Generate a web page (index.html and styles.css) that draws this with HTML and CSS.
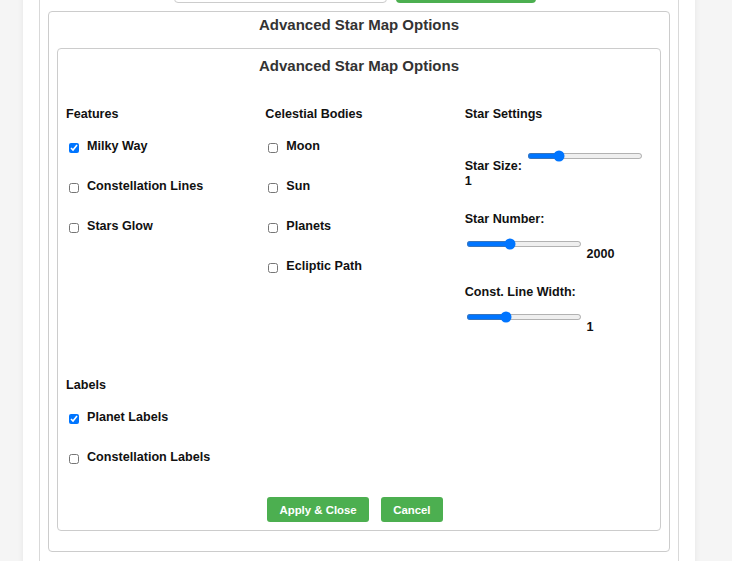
FILE: index.html
```html
<!DOCTYPE html>
<html lang="en">
<head>
<meta charset="utf-8">
<title>Advanced Star Map Options</title>
<link rel="stylesheet" href="styles.css">
</head>
<body>
<div class="page">
  <div class="container">
    <div class="toolbar">
      <input class="search" type="text" aria-label="Location">
      <button class="save-btn" type="button" aria-label="Generate"></button>
    </div>
    <section class="options-card">
      <h3 class="card-title">Advanced Star Map Options</h3>
      <div class="options-dialog">
        <h3 class="card-title dialog-title">Advanced Star Map Options</h3>
        <div class="options-grid">
          <div class="group">
            <h4 class="group-title">Features</h4>
            <label class="option"><input type="checkbox" checked><span>Milky Way</span></label>
            <label class="option"><input type="checkbox"><span>Constellation Lines</span></label>
            <label class="option"><input type="checkbox"><span>Stars Glow</span></label>
          </div>
          <div class="group">
            <h4 class="group-title">Celestial Bodies</h4>
            <label class="option"><input type="checkbox"><span>Moon</span></label>
            <label class="option"><input type="checkbox"><span>Sun</span></label>
            <label class="option"><input type="checkbox"><span>Planets</span></label>
            <label class="option"><input type="checkbox"><span>Ecliptic Path</span></label>
          </div>
          <div class="group">
            <h4 class="group-title">Star Settings</h4>
            <div class="setting first"><label>Star Size:</label> <input class="range" type="range" min="0" max="4" step="0.1" value="1"> <span>1</span></div>
            <div class="setting"><label>Star Number:</label> <input class="range" type="range" min="0" max="5500" step="100" value="2000"> <span>2000</span></div>
            <div class="setting"><label>Const. Line Width:</label> <input class="range" type="range" min="0" max="3" step="0.1" value="1"> <span>1</span></div>
          </div>
          <div class="group labels-group">
            <h4 class="group-title">Labels</h4>
            <label class="option"><input type="checkbox" checked><span>Planet Labels</span></label>
            <label class="option"><input type="checkbox"><span>Constellation Labels</span></label>
          </div>
        </div>
        <div class="actions"><button class="btn" type="button">Apply &amp; Close</button> <button class="btn" type="button">Cancel</button></div>
      </div>
    </section>
  </div>
</div>
</body>
</html>
```

FILE: styles.css
```css
html, body {
  margin: 0;
  padding: 0;
}

body {
  background: #f5f5f5;
  font-family: "Liberation Sans", Arial, sans-serif;
  color: #111;
  overflow: hidden;
}

.page {
  margin-left: 23px;
  width: 672px;
  box-sizing: border-box;
  padding: 0 16px;
  background: #fff;
  min-height: 640px;
  box-shadow: 0 0 6px rgba(0, 0, 0, 0.07);
}

.container {
  border-left: 1px solid #d9d9d9;
  border-right: 1px solid #d9d9d9;
  padding: 0 8px;
  min-height: 640px;
}

.toolbar {
  display: flex;
  justify-content: center;
  gap: 9px;
  padding-right: 9px;
  height: 30px;
  margin-top: -27px;
  margin-bottom: 8px;
}

.search {
  width: 213px;
  height: 30px;
  box-sizing: border-box;
  border: 1px solid #ccc;
  border-radius: 4px;
  background: #fff;
}

.save-btn {
  width: 140px;
  height: 30px;
  border: none;
  border-radius: 4px;
  background: #4caf50;
}

.options-card {
  border: 1px solid #ccc;
  border-radius: 4px;
  padding: 4px 8px 20px;
}

.card-title {
  margin: 0 0 15px;
  font-size: 15px;
  line-height: 17px;
  font-weight: bold;
  text-align: center;
  color: #333;
}

.options-dialog {
  border: 1px solid #ccc;
  border-radius: 4px;
  padding: 8px;
}

.dialog-title {
  margin-bottom: 33px;
}

.options-grid {
  display: grid;
  grid-template-columns: repeat(3, 1fr);
  column-gap: 12px;
  row-gap: 43px;
}

.group-title {
  margin: 0 0 17px;
  font-size: 12.6px;
  line-height: 14px;
  font-weight: bold;
  color: #111;
}

.option {
  display: flex;
  align-items: flex-start;
  font-size: 12.6px;
  line-height: 14px;
  font-weight: bold;
  margin-bottom: 25px;
}

.option span {
  padding-top: 1px;
}

.option:last-child {
  margin-bottom: 0;
}

.option input {
  width: 10px;
  height: 10px;
  margin: 5px 8px 0 3px;
  flex: none;
}

.setting {
  font-size: 12.6px;
  font-weight: bold;
  line-height: 15px;
  margin-bottom: 23px;
}

.setting:last-child {
  margin-bottom: 0;
}

.setting.first {
  margin-top: 18px;
}

.range {
  zoom: 0.75;
  width: 155px;
  margin: 14.67px 1.33px 2.67px;
  vertical-align: 10.67px;
}

.actions {
  margin-top: 33px;
  text-align: center;
  font-size: 12.6px;
  line-height: 25px;
}

.btn {
  height: 25px;
  padding: 0 12.5px;
  margin: 0 8px 0 0;
  border: none;
  border-radius: 3px;
  background: #4caf50;
  color: #fff;
  font-family: "Liberation Sans", Arial, sans-serif;
  font-size: 11.4px;
  font-weight: bold;
  vertical-align: top;
}
```
